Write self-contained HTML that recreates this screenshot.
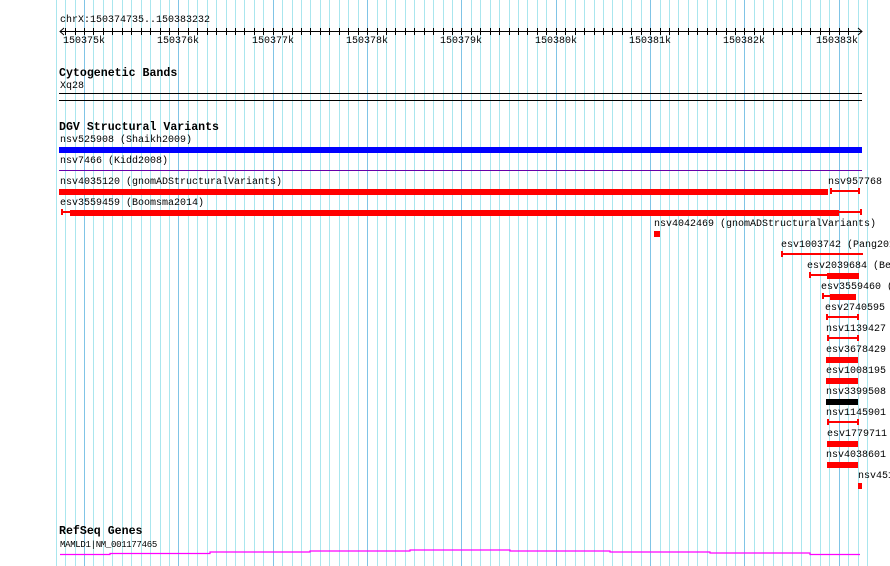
<!DOCTYPE html>
<html><head><meta charset="utf-8"><style>
body{margin:0;width:890px;height:566px;background:#fff;position:relative;overflow:hidden;font-family:"Liberation Mono",monospace;font-size:10px;color:#000}
.t{position:absolute;line-height:10px;white-space:nowrap}
.h{position:absolute;font-weight:bold;font-size:11.6px;line-height:12px;white-space:nowrap}
.b{position:absolute;height:6px;background:#f00}
.l{position:absolute;height:2px;background:#f00}
.k{position:absolute;width:2px;height:6px;background:#f00}
</style></head><body>
<svg style="position:absolute;left:0;top:0" width="890" height="566">
<path d="M56.5 0v566M65.5 0v566M75.5 0v566M93.5 0v566M103.5 0v566M112.5 0v566M122.5 0v566M131.5 0v566M141.5 0v566M150.5 0v566M160.5 0v566M169.5 0v566M188.5 0v566M197.5 0v566M207.5 0v566M216.5 0v566M226.5 0v566M235.5 0v566M244.5 0v566M254.5 0v566M263.5 0v566M282.5 0v566M292.5 0v566M301.5 0v566M310.5 0v566M320.5 0v566M329.5 0v566M339.5 0v566M348.5 0v566M358.5 0v566M377.5 0v566M386.5 0v566M395.5 0v566M405.5 0v566M414.5 0v566M424.5 0v566M433.5 0v566M443.5 0v566M452.5 0v566M471.5 0v566M480.5 0v566M490.5 0v566M499.5 0v566M509.5 0v566M518.5 0v566M527.5 0v566M537.5 0v566M546.5 0v566M565.5 0v566M575.5 0v566M584.5 0v566M594.5 0v566M603.5 0v566M612.5 0v566M622.5 0v566M631.5 0v566M641.5 0v566M660.5 0v566M669.5 0v566M678.5 0v566M688.5 0v566M697.5 0v566M707.5 0v566M716.5 0v566M726.5 0v566M735.5 0v566M754.5 0v566M763.5 0v566M773.5 0v566M782.5 0v566M792.5 0v566M801.5 0v566M810.5 0v566M820.5 0v566M829.5 0v566M848.5 0v566M858.5 0v566M867.5 0v566" stroke="#aae6ee" stroke-width="1"/>
<path d="M84.5 0v566M178.5 0v566M273.5 0v566M367.5 0v566M461.5 0v566M556.5 0v566M650.5 0v566M744.5 0v566M839.5 0v566" stroke="#80c4e6" stroke-width="1"/>
<line x1="60" y1="31.5" x2="862" y2="31.5" stroke="#000"/>
<polyline points="64,28 60,31.5 64,35" fill="none" stroke="#000"/>
<polyline points="858,28 862,31.5 858,35" fill="none" stroke="#000"/>
<path d="M65.5 28v7M75.5 28v7M84.5 28v7M93.5 28v7M103.5 28v7M112.5 28v7M122.5 28v7M131.5 28v7M141.5 28v7M150.5 28v7M160.5 28v7M169.5 28v7M178.5 28v7M188.5 28v7M197.5 28v7M207.5 28v7M216.5 28v7M226.5 28v7M235.5 28v7M244.5 28v7M254.5 28v7M263.5 28v7M273.5 28v7M282.5 28v7M292.5 28v7M301.5 28v7M310.5 28v7M320.5 28v7M329.5 28v7M339.5 28v7M348.5 28v7M358.5 28v7M367.5 28v7M377.5 28v7M386.5 28v7M395.5 28v7M405.5 28v7M414.5 28v7M424.5 28v7M433.5 28v7M443.5 28v7M452.5 28v7M461.5 28v7M471.5 28v7M480.5 28v7M490.5 28v7M499.5 28v7M509.5 28v7M518.5 28v7M527.5 28v7M537.5 28v7M546.5 28v7M556.5 28v7M565.5 28v7M575.5 28v7M584.5 28v7M594.5 28v7M603.5 28v7M612.5 28v7M622.5 28v7M631.5 28v7M641.5 28v7M650.5 28v7M660.5 28v7M669.5 28v7M678.5 28v7M688.5 28v7M697.5 28v7M707.5 28v7M716.5 28v7M726.5 28v7M735.5 28v7M744.5 28v7M754.5 28v7M763.5 28v7M773.5 28v7M782.5 28v7M792.5 28v7M801.5 28v7M810.5 28v7M820.5 28v7M829.5 28v7M839.5 28v7M848.5 28v7" stroke="#000" stroke-width="1"/>
<polyline points="60,554.5 110,554.5 110,553.5 210,553.5 210,552 310,552 310,551 410,551 410,550 510,550 510,551 610,551 610,552 710,552 710,553 810,553 810,554.5 860,554.5" fill="none" stroke="#f0f" stroke-width="1.2"/>
</svg>
<div class="t" style="left:60px;top:16px">chrX:150374735..150383232</div>
<div class="t" style="left:63px;top:37px">150375k</div>
<div class="t" style="left:157px;top:37px">150376k</div>
<div class="t" style="left:252px;top:37px">150377k</div>
<div class="t" style="left:346px;top:37px">150378k</div>
<div class="t" style="left:440px;top:37px">150379k</div>
<div class="t" style="left:535px;top:37px">150380k</div>
<div class="t" style="left:629px;top:37px">150381k</div>
<div class="t" style="left:723px;top:37px">150382k</div>
<div class="t" style="left:816px;top:37px">150383k</div>

<div class="h" style="left:59px;top:68px">Cytogenetic Bands</div>
<div class="t" style="left:60px;top:82px">Xq28</div>
<div style="position:absolute;left:59px;top:93px;width:803px;height:1px;background:#000"></div>
<div style="position:absolute;left:59px;top:100px;width:803px;height:1px;background:#000"></div>

<div class="h" style="left:59px;top:122px">DGV Structural Variants</div>
<div class="t" style="left:60px;top:136px">nsv525908 (Shaikh2009)</div>
<div style="position:absolute;left:59px;top:147px;width:803px;height:6px;background:#00f"></div>
<div class="t" style="left:60px;top:157px">nsv7466 (Kidd2008)</div>
<div style="position:absolute;left:59px;top:170px;width:803px;height:1px;background:#60a"></div>

<div class="t" style="left:60px;top:178px">nsv4035120 (gnomADStructuralVariants)</div>
<div class="b" style="left:59px;top:189px;width:769px"></div>
<div class="t" style="left:828px;top:178px">nsv957768</div>
<div class="l" style="left:830px;top:190px;width:29px"></div><div class="k" style="left:830px;top:188px"></div><div class="k" style="left:858px;top:188px"></div>

<div class="t" style="left:60px;top:199px">esv3559459 (Boomsma2014)</div>
<div class="l" style="left:61px;top:211px;width:800px"></div><div class="k" style="left:61px;top:209px"></div><div class="k" style="left:860px;top:209px"></div>
<div class="b" style="left:70px;top:210px;width:769px"></div>

<div class="t" style="left:654px;top:220px">nsv4042469 (gnomADStructuralVariants)</div>
<div class="b" style="left:654px;top:231px;width:6px"></div>

<div class="t" style="left:781px;top:241px">esv1003742 (Pang2010)</div>
<div class="l" style="left:781px;top:253px;width:82px"></div><div class="k" style="left:781px;top:251px"></div>

<div class="t" style="left:807px;top:262px">esv2039684 (Be</div>
<div class="l" style="left:809px;top:274px;width:50px"></div><div class="k" style="left:809px;top:272px"></div>
<div class="b" style="left:827px;top:273px;width:32px"></div>

<div class="t" style="left:821px;top:283px">esv3559460 (</div>
<div class="l" style="left:822px;top:295px;width:34px"></div><div class="k" style="left:822px;top:293px"></div>
<div class="b" style="left:830px;top:294px;width:26px"></div>

<div class="t" style="left:825px;top:304px">esv2740595</div>
<div class="l" style="left:826px;top:316px;width:33px"></div><div class="k" style="left:826px;top:314px"></div><div class="k" style="left:857px;top:314px"></div>

<div class="t" style="left:826px;top:325px">nsv1139427</div>
<div class="l" style="left:827px;top:337px;width:32px"></div><div class="k" style="left:827px;top:335px"></div><div class="k" style="left:857px;top:335px"></div>

<div class="t" style="left:826px;top:346px">esv3678429</div>
<div class="b" style="left:826px;top:357px;width:32px"></div>
<div class="t" style="left:826px;top:367px">esv1008195</div>
<div class="b" style="left:826px;top:378px;width:32px"></div>
<div class="t" style="left:826px;top:388px">nsv3399508</div>
<div class="b" style="left:826px;top:399px;width:32px;background:#000"></div>
<div class="t" style="left:826px;top:409px">nsv1145901</div>
<div class="l" style="left:827px;top:421px;width:32px"></div><div class="k" style="left:827px;top:419px"></div><div class="k" style="left:857px;top:419px"></div>
<div class="t" style="left:827px;top:430px">esv1779711</div>
<div class="b" style="left:827px;top:441px;width:31px"></div>
<div class="t" style="left:826px;top:451px">nsv4038601</div>
<div class="b" style="left:827px;top:462px;width:31px"></div>
<div class="t" style="left:858px;top:472px">nsv4519</div>
<div class="b" style="left:858px;top:483px;width:4px"></div>

<div class="h" style="left:59px;top:526px">RefSeq Genes</div>
<div class="t" style="left:60px;top:540px;font-size:9px;letter-spacing:-0.3px">MAMLD1|NM_001177465</div>
</body></html>
